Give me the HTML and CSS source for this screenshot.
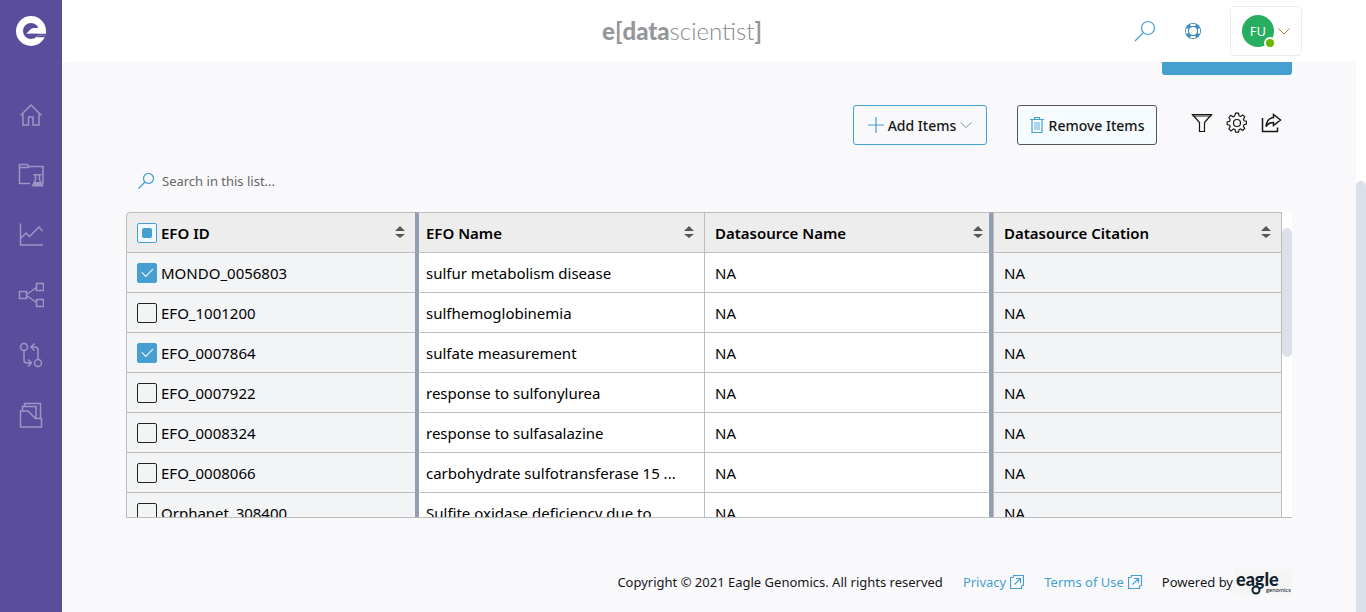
FILE: index.html
```html
<!DOCTYPE html>
<html lang="en">
<head>
<meta charset="utf-8">
<title>e[datascientist]</title>
<link rel="stylesheet" href="styles.css">
</head>
<body>
<div class="app">
  <nav class="sidebar" aria-label="Main">
    <a class="brand" href="#" aria-label="Eagle home">
      <svg width="30" height="30" viewBox="0 0 30 30"><circle cx="15" cy="15" r="15" fill="#fff"/><circle cx="15" cy="15" r="8" fill="#5a4e9c"/><path d="M22 11h7l1 6.800h-8z" fill="#fff"/><path d="M10 17.800c2.500-1.500 4.500-5.800 7.500-5.800h7v5.800z" fill="#fff"/><path d="M10 17.800h20v1.700H10z" fill="#5a4e9c"/><path d="M21.500 19.500H30v1.800h-9z" fill="#5a4e9c"/></svg>
    </a>
    <a class="nav-item" href="#" aria-label="Home"><svg width="26" height="26" viewBox="0 0 26 26"><path d="M2.500 13.500L13 3l10.500 10.500M5 12v11h5.500v-8h4.500v8H21V12"/></svg></a>
    <a class="nav-item" href="#" aria-label="Experiments"><svg width="26" height="26" viewBox="0 0 26 26"><path d="M12 21.500H1.500v-19H9l2 2h14v18M1.500 5.500h8l2-1"/><path class="solid" d="M15.500 12h8v1.500h-1.200v4l3.200 7h-12l3.200-7v-4h-1.200z"/><path class="cut" d="M18.300 13.500h2.400v4l1 2.500h-4.400l1-2.500z"/></svg></a>
    <a class="nav-item" href="#" aria-label="Analytics"><svg width="26" height="26" viewBox="0 0 26 26"><path d="M2.500 1.500v21.500H25M3 16l5-5 3.500 3.500L21 5l3.500 4"/></svg></a>
    <a class="nav-item" href="#" aria-label="Network"><svg width="26" height="26" viewBox="0 0 26 26"><path d="M1.500 9.500h7v7h-7zM18.500 1.500h7v7h-7zM18.500 17.500h7v7h-7zM8.500 12.500l10-7M8.500 13.500l10 7"/></svg></a>
    <a class="nav-item" href="#" aria-label="Compare"><svg width="26" height="26" viewBox="0 0 26 26"><circle cx="6" cy="5" r="3.500"/><circle cx="20" cy="21" r="3.500"/><path d="M6 8.500V18q0 3 3 3h4M10 17.500l3.500 3.500-3.500 3.500M20 17.500V8q0-3-3-3h-4M16.500 1.500L13 5l3.500 3.500"/></svg></a>
    <a class="nav-item" href="#" aria-label="Collections"><svg width="26" height="26" viewBox="0 0 26 26"><path d="M2.500 9v16h21v-8.500h-6L10 9zM4.500 9V4.500H18v12M6.500 4.500v-3h16v15"/></svg></a>
  </nav>

  <div class="page">
    <header class="topbar">
      <a class="wordmark" href="#"><b>e</b><span>[</span><b>data</b>scientist<span>]</span></a>
      <div class="top-actions">
        <button class="plain" aria-label="Search"><svg class="blue" width="22" height="22" viewBox="0 0 22 22"><circle cx="14" cy="8" r="6.500"/><path d="M9.300 12.700L1 21"/></svg></button>
        <button class="plain help" aria-label="Help"><svg width="18" height="18" viewBox="0 0 18 18"><circle cx="9" cy="9" r="8" fill="#3f8dbd" stroke="none"/><circle cx="9" cy="9" r="4" fill="#fff" stroke="none"/><path d="M6.500 3h5M6.500 15h5M3 6.500v5M15 6.500v5"/></svg></button>
        <button class="account" aria-label="Account menu"><span class="avatar">FU<i></i></span><svg width="12" height="12" viewBox="0 0 12 12"><path d="M.5 3.500L6 9l5.500-5.500"/></svg></button>
      </div>
    </header>

    <div class="viewport">
      <main class="content">
        <div class="primary-row"><button class="primary">Save Changes</button></div>

        <div class="toolbar">
          <button class="outlined add"><svg class="blue" width="16" height="16" viewBox="0 0 16 16"><path d="M8 0v16M0 8h16"/></svg>Add Items<svg class="chev" width="12" height="12" viewBox="0 0 12 12"><path d="M.5 3.500L6 8.500l5.500-5"/></svg></button>
          <button class="outlined remove"><svg class="blue" width="14" height="16" viewBox="0 0 14 16"><path d="M0 2.500h14M4.500 2V.5h5V2M2 3v12.500h10V3"/><path d="M5 5v8M7 5v8M9 5v8" opacity=".7"/></svg>Remove Items</button>
          <div class="icon-group">
            <button class="plain" aria-label="Filter"><svg width="22" height="22" viewBox="0 0 22 22"><path d="M1.500 2.500h19l-7 8v9h-5v-9zM1.500 4h19"/></svg></button>
            <button class="plain" aria-label="Settings"><svg width="22" height="22" viewBox="0 0 22 22"><circle cx="11" cy="11" r="3.500"/><path d="M9.500 1.500h3l.6 2.700 1.600.7 2.300-1.500 2 2-1.400 2.400.7 1.600 2.400.6v2.800l-2.500.7-.7 1.500 1.500 2.500-2 2-2.400-1.500-1.500.7-.6 2.600h-3l-.6-2.600-1.600-.7L4.500 20l-2-2 1.400-2.500-.6-1.500-2.600-.7v-2.700l2.600-.6.6-1.600L2.500 6l2-2.200 2.300 1.500 1.600-.8z" transform="translate(.5 -.3) scale(.96)"/></svg></button>
            <button class="plain" aria-label="Share"><svg width="22" height="22" viewBox="0 0 22 22"><path d="M1.500 6v13.500h15v-4" stroke-width="1.500"/><path d="M12.500 2.500l7 5.500-7 5.500v-3c-4 0-6 1.500-7.500 4 .5-5 3-8.500 7.500-9z" stroke-width="1.500"/></svg></button>
          </div>
        </div>

        <label class="search"><svg class="blue" width="16" height="16" viewBox="0 0 16 16"><circle cx="10.500" cy="5.500" r="5"/><path d="M7 9L.5 15.500"/></svg><input type="text" placeholder="Search in this list..." aria-label="Search in this list"></label>

        <div class="grid-box">
          <div class="grid-scroll">
            <table>
              <thead><tr>
                <th><span class="head"><label><input type="checkbox" class="partial" checked aria-label="Select all">EFO ID</label><svg width="10" height="12" viewBox="0 0 10 12"><path d="M0 5l5-5 5 5zM0 8h10l-5 4z"/></svg></span></th>
                <th><span class="head">EFO Name<svg width="10" height="12" viewBox="0 0 10 12"><path d="M0 5l5-5 5 5zM0 8h10l-5 4z"/></svg></span></th>
                <th><span class="head">Datasource Name<svg width="10" height="12" viewBox="0 0 10 12"><path d="M0 5l5-5 5 5zM0 8h10l-5 4z"/></svg></span></th>
                <th><span class="head">Datasource Citation<svg width="10" height="12" viewBox="0 0 10 12"><path d="M0 5l5-5 5 5zM0 8h10l-5 4z"/></svg></span></th>
              </tr></thead>
              <tbody>
                <tr><td><label><input type="checkbox" checked>MONDO_0056803</label></td><td>sulfur metabolism disease</td><td>NA</td><td>NA</td></tr>
                <tr><td><label><input type="checkbox">EFO_1001200</label></td><td>sulfhemoglobinemia</td><td>NA</td><td>NA</td></tr>
                <tr><td><label><input type="checkbox" checked>EFO_0007864</label></td><td>sulfate measurement</td><td>NA</td><td>NA</td></tr>
                <tr><td><label><input type="checkbox">EFO_0007922</label></td><td>response to sulfonylurea</td><td>NA</td><td>NA</td></tr>
                <tr><td><label><input type="checkbox">EFO_0008324</label></td><td>response to sulfasalazine</td><td>NA</td><td>NA</td></tr>
                <tr><td><label><input type="checkbox">EFO_0008066</label></td><td>carbohydrate sulfotransferase 15 ...</td><td>NA</td><td>NA</td></tr>
                <tr><td><label><input type="checkbox">Orphanet_308400</label></td><td>Sulfite oxidase deficiency due to</td><td>NA</td><td>NA</td></tr>
              </tbody>
            </table>
          </div>
          <div class="grid-track"><div class="grid-thumb"></div></div>
        </div>

        <footer class="footer">
          <span>Copyright © 2021 Eagle Genomics. All rights reserved</span>
          <a href="#">Privacy<svg class="blue" width="14" height="14" viewBox="0 0 14 14"><path d="M3.500 2.500V.5h10v10h-2M3 2.500H.5v11h11V11M4.500 9.500l6-6M6 3.500h4.500V8"/></svg></a>
          <a href="#">Terms of Use<svg class="blue" width="14" height="14" viewBox="0 0 14 14"><path d="M3.500 2.500V.5h10v10h-2M3 2.500H.5v11h11V11M4.500 9.500l6-6M6 3.500h4.500V8"/></svg></a>
          <span class="powered">Powered by<span class="eagle"><b>eagle</b><small>genomics</small><svg width="10" height="10" viewBox="0 0 10 10"><circle cx="5" cy="5" r="3.500"/></svg></span></span>
        </footer>
      </main>
      <div class="page-track"><div class="page-thumb"></div></div>
    </div>
  </div>
</div>
</body>
</html>
```

FILE: styles.css
```css
* { box-sizing: border-box; }
body {
  margin: 0;
  font-family: "Noto Sans", "Open Sans", sans-serif;
  font-size: 15px;
  color: #161616;
  background: #f9f9fc;
}
button, input { font: inherit; color: inherit; }
a { color: inherit; text-decoration: none; }
svg { flex: none; display: block; }
.app { display: flex; height: 100vh; }

.sidebar {
  width: 62px;
  flex: none;
  background: #5a4e9c;
  display: flex;
  flex-direction: column;
  align-items: center;
  gap: 34px;
}
.brand { padding-top: 16px; margin-bottom: 22px; }
.nav-item svg { fill: none; stroke: #9d95c4; stroke-width: 1.5; }
.nav-item .solid { fill: #9d95c4; stroke: none; }
.nav-item .cut { fill: #5a4e9c; stroke: none; }

.page { flex: 1; min-width: 0; display: flex; flex-direction: column; }
.topbar {
  height: 62px;
  flex: none;
  background: #fff;
  padding-right: 64px;
  display: grid;
  grid-template-columns: 1fr auto 1fr;
  align-items: center;
}
.wordmark {
  grid-column: 2;
  font-family: Lato, sans-serif;
  font-size: 24px;
  line-height: 30px;
  font-weight: 300;
  color: #85888b;
}
.wordmark b { font-weight: 900; color: #94979a; }
.wordmark span { font-weight: 700; color: #94979a; }
.top-actions { display: flex; justify-content: flex-end; align-items: center; }
.plain { border: 0; padding: 0; background: none; }
.plain svg { fill: none; stroke: #161616; stroke-width: 1.2; }
.blue, .plain svg.blue { fill: none; stroke: #459fd0; stroke-width: 1.2; }
.help { margin: 0 28px; }
.help svg { stroke: #fff; stroke-width: 2; }
.account {
  width: 72px;
  height: 50px;
  padding: 0;
  border: 1px solid #ededed;
  border-radius: 4px;
  background: #fff;
  display: flex;
  align-items: center;
  justify-content: center;
  gap: 4px;
}
.account svg { fill: none; stroke: #b8863c; }
.avatar {
  position: relative;
  width: 32px;
  height: 32px;
  border-radius: 50%;
  background: #27ae60;
  color: #fff;
  font-size: 13px;
  line-height: 32px;
}
.avatar i {
  position: absolute;
  right: -2px;
  bottom: -2px;
  width: 12px;
  height: 12px;
  border: 2px solid #fff;
  border-radius: 50%;
  background: #6bb700;
}

.viewport { flex: 1; min-height: 0; display: flex; overflow: hidden; }
.content { flex: 1; min-width: 0; padding: 0 64px; }
.page-track { width: 10px; background: #fff; padding-top: 119px; }
.page-thumb { height: 100%; background: #dce1e9; border-radius: 5px 5px 0 0; }

.primary-row { display: flex; justify-content: flex-end; margin-top: -27px; }
.primary {
  width: 130px;
  height: 40px;
  border: 0;
  border-radius: 3px;
  background: #459fd0;
  color: #fff;
  font-size: 14px;
  line-height: 16px;
  padding: 0 0 2px;
  font-weight: 500;
}
.toolbar {
  display: flex;
  justify-content: flex-end;
  gap: 30px;
  padding: 30px 9px 0 0;
}
.outlined {
  height: 40px;
  padding: 0;
  border: 1px solid #459fd0;
  border-radius: 3px;
  background: #f9f9fc;
  font-size: 14px;
  font-weight: 500;
  display: flex;
  align-items: center;
  justify-content: center;
  gap: 4px;
}
.add { width: 134px; }
.remove { width: 140px; gap: 5px; background: #f5fbff; border-color: #565656; }
.chev { fill: none; stroke: #7a9c95; }
.icon-group { display: flex; gap: 13px; padding: 0 0 4px 4px; align-items: center; }

.search {
  display: flex;
  align-items: center;
  gap: 8px;
  height: 40px;
  margin-top: 16px;
  padding-left: 12px;
}
.search input {
  width: 240px;
  padding: 0;
  border: 0;
  outline: 0;
  background: none;
  font-size: 13px;
}
.search input::placeholder { color: #666; opacity: 1; }

.grid-box {
  display: flex;
  height: 306px;
  margin-top: 11px;
  border-bottom: 1px solid #bdbdbd;
  background: #fff;
  border-radius: 4px 0 0 0;
}
.grid-scroll { flex: 1; min-width: 0; overflow: hidden; border-radius: 4px 0 0 0; }
.grid-track { width: 10px; padding-top: 16px; }
.grid-thumb { height: 129px; border-radius: 5px; background: #dce1e9; }
table { width: 100%; table-layout: fixed; border-collapse: separate; border-spacing: 0; }
th, td {
  height: 40px;
  padding: 0 10px;
  border: 0 solid #bdbdbd;
  border-bottom-width: 1px;
  text-align: left;
  white-space: nowrap;
  overflow: hidden;
  color: #000;
}
th { height: 41px; border-top-width: 1px; background: #ededed; font-size: 15px; font-weight: 600; }
th:nth-child(1), td:nth-child(1), th:nth-child(3), td:nth-child(3) { border-left-width: 1px; }
th:nth-child(4), td:nth-child(4) { border-left-width: 1px; border-right-width: 1px; }
td:nth-child(1), td:nth-child(4) { background: #f2f4f6; }
th:nth-child(2), td:nth-child(2) { border-left: 4px solid #929eb2; padding-left: 7px; }
th:nth-child(3), td:nth-child(3) { border-right: 4px solid #929eb2; padding-right: 6px; }
th:first-child { border-top-left-radius: 4px; }
.head { display: flex; align-items: center; justify-content: space-between; }
.head > svg { fill: #565656; margin-bottom: 2px; }
td label, th label { display: flex; align-items: center; gap: 4px; }
input[type="checkbox"] {
  appearance: none;
  width: 20px;
  height: 20px;
  margin: 0;
  flex: none;
  border: 1px solid #222;
  border-radius: 2px;
  display: grid;
  place-items: center;
}
input[type="checkbox"]:checked { background: #459fd0; border-color: #459fd0; }
input[type="checkbox"]:checked::before {
  content: "";
  width: 10px;
  height: 5px;
  margin-bottom: 3px;
  border: solid #fff;
  border-width: 0 0 1px 1px;
  transform: rotate(-45deg);
}
input.partial[type="checkbox"]:checked { background: #f3faff; }
input.partial[type="checkbox"]:checked::before {
  width: 10px;
  height: 10px;
  margin: 0;
  border: 0;
  border-radius: 2px;
  background: #459fd0;
  transform: none;
}

.footer {
  display: flex;
  justify-content: flex-end;
  align-items: center;
  gap: 20px;
  padding-top: 51px;
  font-size: 13px;
  line-height: 26px;
}
.footer a { display: flex; align-items: center; gap: 4px; color: #459fd0; }
.powered { display: flex; align-items: center; gap: 1px; }
.eagle {
  position: relative;
  width: 58px;
  height: 26px;
  background: #f5f5f5;
  font-family: Lato, sans-serif;
  color: #10212f;
}
.eagle b { position: absolute; left: 2px; top: 1px; font-size: 18px; line-height: 18px; font-weight: 900; }
.eagle small { position: absolute; left: 32px; top: 18px; font-size: 6px; line-height: 6px; }
.eagle svg { position: absolute; left: 17px; top: 16px; fill: #f5f5f5; stroke: #10212f; stroke-width: 2; }
```
